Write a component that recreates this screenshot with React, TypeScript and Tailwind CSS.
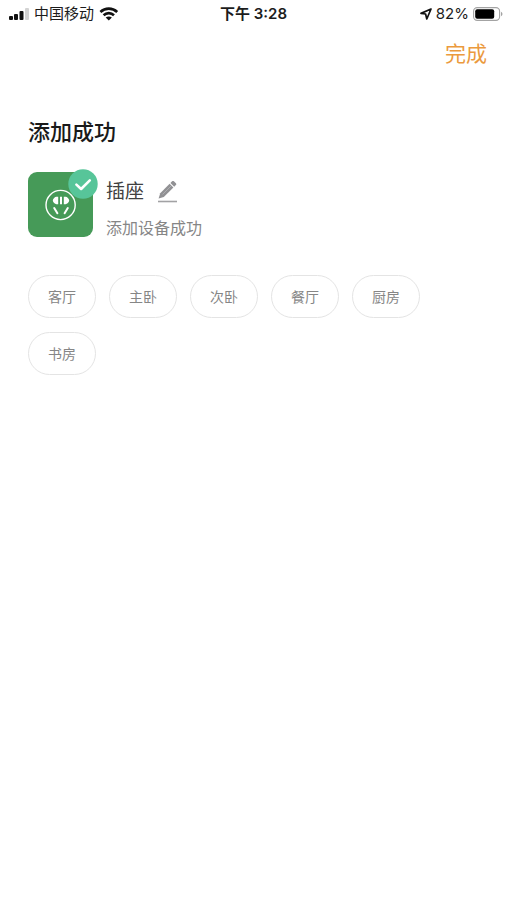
import { useState } from 'react';

const rooms = ['客厅', '主卧', '次卧', '餐厅', '厨房', '书房'];

function StatusBar() {
  return (
    <div className="grid grid-cols-3 items-center h-7 px-2 text-[15px] leading-5 text-[#1c1c1c]">
      <div className="flex items-center gap-1">
        <svg className="w-[22px] h-3" viewBox="0 0 22 12" aria-hidden="true">
          <rect x="1" y="8" width="4" height="4" rx="1" fill="#111" />
          <rect x="6" y="6" width="4" height="6" rx="1" fill="#111" />
          <rect x="11.5" y="3" width="4" height="9" rx="1" fill="#111" />
          <rect x="17" y="0" width="4" height="12" rx="1" fill="#d3d3d3" />
        </svg>
        <span>中国移动</span>
        <svg className="w-[22px] h-[14px]" viewBox="-1 0 22 14" fill="none" stroke="#111" strokeWidth="2.6" aria-hidden="true">
          <path d="M1.4 5C6.2.5 13.4.5 18.2 5" />
          <path d="M4.6 8.3c3-2.9 7.4-2.9 10.4 0" />
          <path d="m9.8 13.6-3.1-3c1.8-1.6 4.4-1.6 6.2 0z" fill="#111" stroke="none" />
        </svg>
      </div>
      <div className="text-center font-semibold">下午 3:28</div>
      <div className="flex items-center justify-end gap-1">
        <svg className="w-3 h-3" viewBox="0 0 12 12" fill="none" stroke="#111" strokeWidth="1.7" strokeLinejoin="round" aria-hidden="true">
          <path d="M11 1 1 5.4l4.6.6 1.2 5z" />
        </svg>
        <span>82%</span>
        <svg className="w-[30px] h-[14px] -mr-1" viewBox="0 0 30 14" aria-hidden="true">
          <rect x=".6" y=".6" width="26" height="12.8" rx="3.6" fill="none" stroke="#a3a3a3" strokeWidth="1.1" />
          <rect x="2.2" y="2.2" width="19" height="9.6" rx="2" fill="#000" />
          <path d="M28 4.8c2 .8 2 3.6 0 4.4z" fill="#a3a3a3" />
        </svg>
      </div>
    </div>
  );
}

function DeviceIcon() {
  return (
    <div className="relative size-[65px] shrink-0 rounded-[9px] bg-[#469a58] flex items-center justify-center">
      <svg className="size-8" viewBox="0 0 32 32" fill="none" aria-hidden="true">
        <circle cx="15.6" cy="16" r="14.6" stroke="#fff" strokeWidth="1.4" />
        <path d="M13.2 7.8v7.4h-1.8c-1.4 0-3.6-2-3.6-3.7s2.2-3.7 3.6-3.7z" fill="#fff" />
        <path d="M18.8 7.8v7.4h1.8c1.4 0 3.6-2 3.6-3.7s-2.2-3.7-3.6-3.7z" fill="#fff" />
        <path d="M16 7.8v7.4" stroke="#fff" strokeWidth="2" />
        <path d="m9.2 19 3.2 5.2M22.8 19l-3.2 5.2" stroke="#fff" strokeWidth="2" strokeLinecap="round" />
      </svg>
      <svg className="absolute -top-[3px] -right-[5px] size-[30px]" viewBox="0 0 30 30" aria-hidden="true">
        <circle cx="15" cy="15" r="14.7" fill="#57c599" />
        <path d="m8.4 15.6 4.7 4.4 8.7-8.6" fill="none" stroke="#fff" strokeWidth="2.6" strokeLinecap="round" strokeLinejoin="round" />
      </svg>
    </div>
  );
}

export default function App() {
  const [room, setRoom] = useState('');

  return (
    <div className="min-h-screen bg-white font-[Inter,'Noto_Sans_CJK_SC',sans-serif]">
      <StatusBar />

      <header className="flex justify-end px-5 pt-[10px]">
        <button type="button" className="text-[21px] leading-8 text-[#eb9a3e]">
          完成
        </button>
      </header>

      <main className="px-7 pt-[46px]">
        <h1 className="text-[22px] leading-8 font-medium text-[#1a1a1a]">添加成功</h1>

        <section className="flex gap-[13px] mt-6">
          <DeviceIcon />
          <div>
            <div className="flex items-center gap-[13px] h-10">
              <h2 className="text-[19px] leading-7 text-[#404040]">插座</h2>
              <button type="button" aria-label="编辑名称">
                <svg className="w-[21px] h-6" viewBox="0 0 21 24" aria-hidden="true">
                  <path d="m1.6 18.4 1.6-5.2L12.6 3.8l3.8 3.8-9.6 9.4z" fill="#919194" />
                  <path d="m13.4 3 1.7-1.7c.5-.5 1.3-.5 1.8 0l2 2c.5.5.5 1.3 0 1.8l-1.7 1.7z" fill="#919194" />
                  <path d="M5.6 14.4 14 6" stroke="#b5b5b7" strokeWidth=".8" />
                  <path d="M1 21.5h19" stroke="#a2a2a4" strokeWidth="1.6" />
                </svg>
              </button>
            </div>
            <p className="mt-1 text-[16px] leading-6 text-[#868686]">添加设备成功</p>
          </div>
        </section>

        <section className="flex flex-wrap gap-x-[13px] gap-y-[14px] mt-[35px]">
          {rooms.map((name) => (
            <button
              key={name}
              type="button"
              aria-pressed={room === name}
              onClick={() => setRoom(name)}
              className="w-[68px] h-[43px] rounded-full border border-[#e4e4e4] text-[14px] leading-5 text-[#868686] aria-pressed:border-[#eb9a3e] aria-pressed:text-[#eb9a3e]"
            >
              {name}
            </button>
          ))}
        </section>
      </main>
    </div>
  );
}
